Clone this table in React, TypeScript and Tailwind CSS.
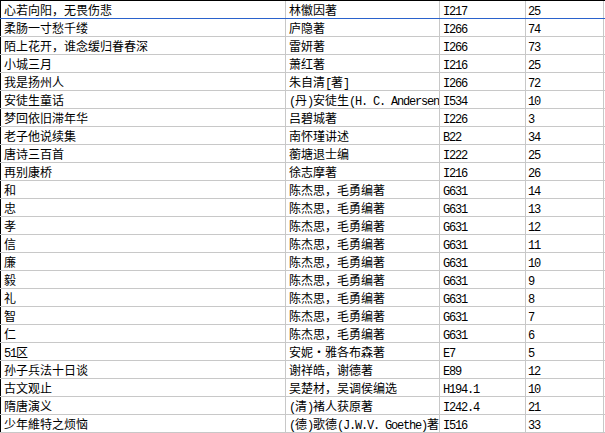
import React from "react";

type Row = [string, string, string, string];

const rows: Row[] = [
  ["心若向阳，无畏伤悲", "林徽因著", "I217", "25"],
  ["柔肠一寸愁千缕", "庐隐著", "I266", "74"],
  ["陌上花开，谁念缓归眷春深", "雷妍著", "I266", "73"],
  ["小城三月", "萧红著", "I216", "25"],
  ["我是扬州人", "朱自清[著]", "I266", "72"],
  ["安徒生童话", "(丹)安徒生(H. C. Andersen", "I534", "10"],
  ["梦回依旧滞年华", "吕碧城著", "I226", "3"],
  ["老子他说续集", "南怀瑾讲述", "B22", "34"],
  ["唐诗三百首", "蘅塘退士编", "I222", "25"],
  ["再别康桥", "徐志摩著", "I216", "26"],
  ["和", "陈杰思，毛勇编著", "G631", "14"],
  ["忠", "陈杰思，毛勇编著", "G631", "13"],
  ["孝", "陈杰思，毛勇编著", "G631", "12"],
  ["信", "陈杰思，毛勇编著", "G631", "11"],
  ["廉", "陈杰思，毛勇编著", "G631", "10"],
  ["毅", "陈杰思，毛勇编著", "G631", "9"],
  ["礼", "陈杰思，毛勇编著", "G631", "8"],
  ["智", "陈杰思，毛勇编著", "G631", "7"],
  ["仁", "陈杰思，毛勇编著", "G631", "6"],
  ["51区", "安妮・雅各布森著", "E7", "5"],
  ["孙子兵法十日谈", "谢祥皓，谢德著", "E89", "12"],
  ["古文观止", "吴楚材，吴调侯编选", "H194.1", "10"],
  ["隋唐演义", "(清)褚人获原著", "I242.4", "21"],
  ["少年維特之烦恼", "(德)歌德(J.W.V. Goethe)著", "I516", "33"],
];

function Txt({ t }: { t: string }) {
  const parts = t.split(/([\x20-\x7e]+)/).filter((p) => p.length > 0);
  return (
    <>
      {parts.map((p, i) =>
        /^[\x20-\x7e]+$/.test(p) ? (
          <span
            key={i}
            className="font-['Liberation_Mono',monospace] tracking-[-1.2px] whitespace-pre"
          >
            {p}
          </span>
        ) : (
          <span key={i}>{p}</span>
        )
      )}
    </>
  );
}

export default function App() {
  return (
    <div className="w-[605px] h-[433px] overflow-hidden bg-white border-t border-black font-['Noto_Sans_CJK_SC',sans-serif] text-[12px] leading-[17px] text-black">
      {rows.map((r, i) => {
        const bottom = i === 0 ? "border-b-[#2a62cc]" : "border-b-[#c8c8c8]";
        return (
          <div key={i} className={`flex h-[18px] border-b ${bottom}`}>
            <div className="w-[286px] shrink-0 border-l border-l-black border-r border-r-[#c8c8c8] pl-[3px] overflow-hidden whitespace-nowrap">
              <Txt t={r[0]} />
            </div>
            <div className="w-[154px] shrink-0 border-r border-r-[#c8c8c8] pl-[3px] overflow-hidden whitespace-nowrap">
              <Txt t={r[1]} />
            </div>
            <div className="w-[86px] shrink-0 border-r border-r-[#c8c8c8] pl-[3px] overflow-hidden whitespace-nowrap">
              <Txt t={r[2]} />
            </div>
            <div className="w-[78px] shrink-0 border-r border-r-[#c8c8c8] pl-[2px] overflow-hidden whitespace-nowrap">
              <Txt t={r[3]} />
            </div>
            <div className="flex-1" />
          </div>
        );
      })}
    </div>
  );
}
